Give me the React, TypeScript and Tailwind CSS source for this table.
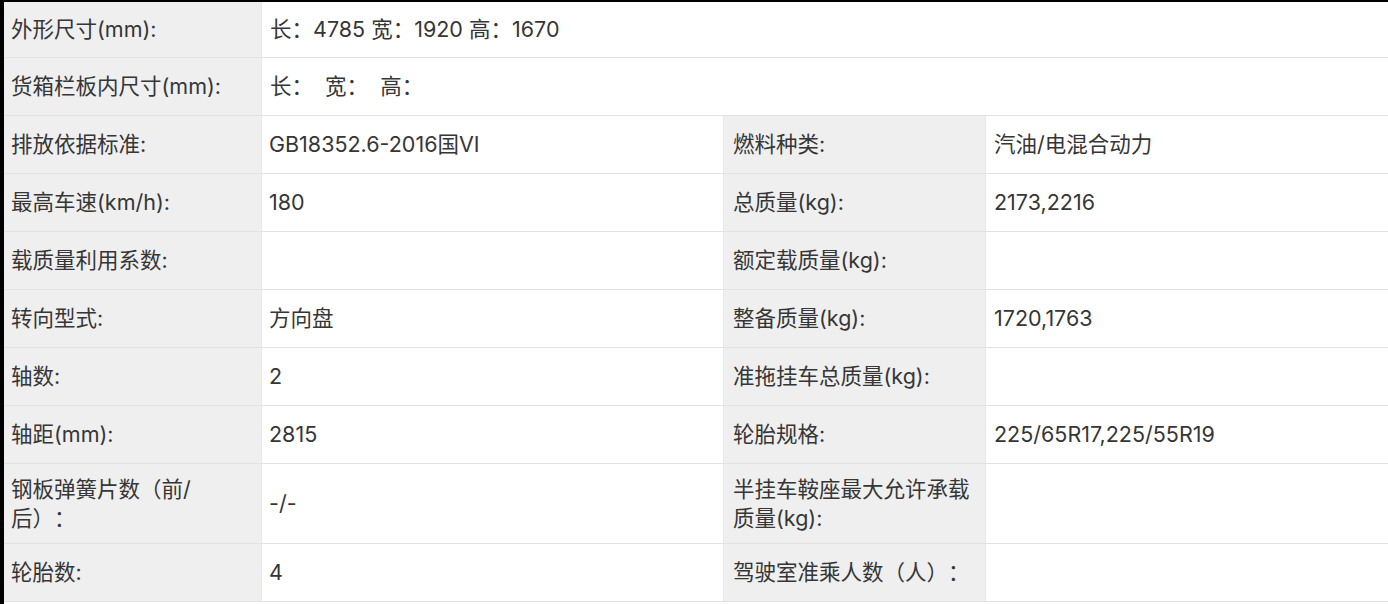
import React from "react";

type Row = {
  cells: [string, string] | [string, string, string, string];
  h: string;
};

const rows: Row[] = [
  { cells: ["外形尺寸(mm):", "长：4785 宽：1920 高：1670"], h: "h-[56px]" },
  { cells: ["货箱栏板内尺寸(mm):", "长：  宽：  高："], h: "h-[58px]" },
  { cells: ["排放依据标准:", "GB18352.6-2016国VI", "燃料种类:", "汽油/电混合动力"], h: "h-[58px]" },
  { cells: ["最高车速(km/h):", "180", "总质量(kg):", "2173,2216"], h: "h-[58px]" },
  { cells: ["载质量利用系数:", "", "额定载质量(kg):", ""], h: "h-[58px]" },
  { cells: ["转向型式:", "方向盘", "整备质量(kg):", "1720,1763"], h: "h-[58px]" },
  { cells: ["轴数:", "2", "准拖挂车总质量(kg):", ""], h: "h-[58px]" },
  { cells: ["轴距(mm):", "2815", "轮胎规格:", "225/65R17,225/55R19"], h: "h-[58px]" },
  {
    cells: ["钢板弹簧片数（前/后）：", "-/-", "半挂车鞍座最大允许承载质量(kg):", ""],
    h: "h-[80px]",
  },
  { cells: ["轮胎数:", "4", "驾驶室准乘人数（人）：", ""], h: "h-[58px]" },
];

export default function App() {
  return (
    <div
      className="w-[1388px] h-[604px] overflow-hidden bg-white border-t-2 border-l-4 border-black text-[#363636] text-[21.5px] leading-[29px] [text-spacing-trim:space-all]"
      style={{ fontFamily: 'Inter, "Noto Sans CJK SC", sans-serif' }}
    >
      {rows.map((r, i) => (
        <div key={i} className={`flex border-b border-[#e2e2e2] ${r.h}`}>
          <div className="w-[258px] shrink-0 bg-[#efefef] flex items-center pl-[7px] pr-[20px] border-r border-[#e8e8e8]">
            {r.cells[0]}
          </div>
          {r.cells.length === 2 ? (
            <div className="flex-1 flex items-center pl-[8px] whitespace-pre">
              {r.cells[1]}
            </div>
          ) : (
            <>
              <div className="w-[462px] shrink-0 flex items-center pl-[7px] border-r border-[#e8e8e8] whitespace-pre">
                {r.cells[1]}
              </div>
              <div className="w-[262px] shrink-0 bg-[#efefef] flex items-center pl-[9px] pr-[8px] border-r border-[#e8e8e8]">
                {r.cells[2]}
              </div>
              <div className="flex-1 flex items-center pl-[8px]">{r.cells[3]}</div>
            </>
          )}
        </div>
      ))}
    </div>
  );
}
